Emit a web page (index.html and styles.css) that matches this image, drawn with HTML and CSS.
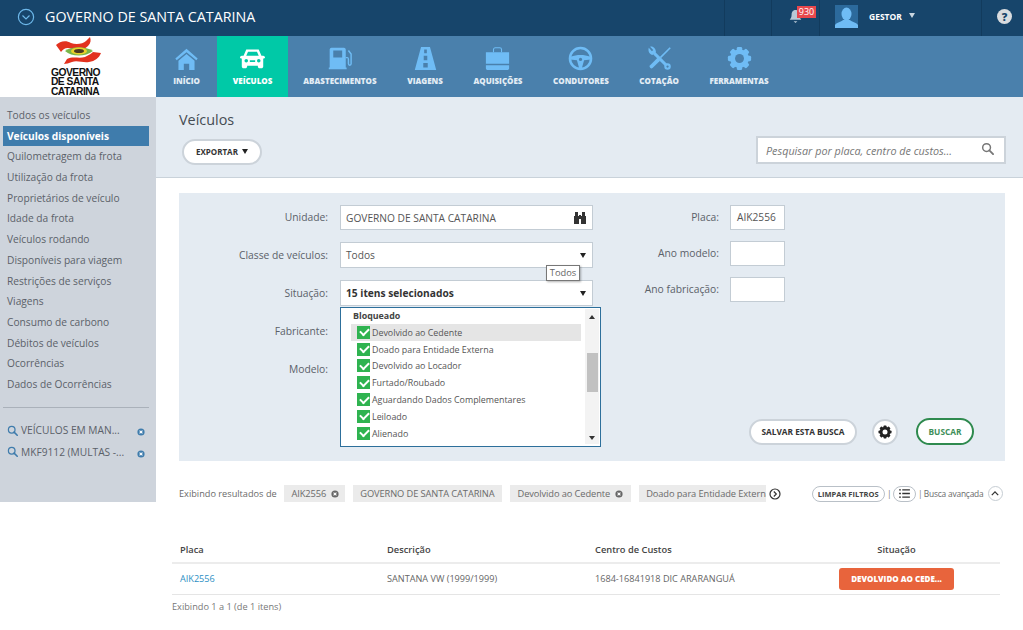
FILE: index.html
```html
<!DOCTYPE html>
<html lang="pt-BR">
<head>
<meta charset="utf-8">
<title>Veículos</title>
<link rel="stylesheet" href="styles.css">
</head>
<body>
<svg class="defs" width="0" height="0" aria-hidden="true">
  <symbol id="gear" viewBox="0 0 28 28">
    <g fill="currentColor">
      <circle cx="14" cy="14" r="10.500"/>
      <rect x="11" y="1" width="6" height="26" rx="1.500"/>
      <rect x="11" y="1" width="6" height="26" rx="1.500" transform="rotate(45 14 14)"/>
      <rect x="11" y="1" width="6" height="26" rx="1.500" transform="rotate(90 14 14)"/>
      <rect x="11" y="1" width="6" height="26" rx="1.500" transform="rotate(135 14 14)"/>
    </g>
    <circle cx="14" cy="14" r="5" class="gear-hole"/>
  </symbol>
  <symbol id="lens" viewBox="0 0 14 14">
    <circle cx="6" cy="6" r="4.200" fill="none" stroke="currentColor" stroke-width="1.600"/>
    <path d="M9 9l4 4" stroke="currentColor" stroke-width="2" stroke-linecap="round"/>
  </symbol>
  <symbol id="xdot" viewBox="0 0 10 10">
    <circle cx="5" cy="5" r="4.500" fill="currentColor"/>
    <path d="M3.200 3.200l3.600 3.600M6.800 3.200l-3.600 3.600" stroke="#fff" stroke-width="1.300"/>
  </symbol>
</svg>

<header class="topbar">
  <svg class="top-toggle" viewBox="0 0 18 18" width="18" height="18"><circle cx="9" cy="9" r="7.600" fill="none" stroke="#6db8ea" stroke-width="1.200"/><path d="M5.500 7.500L9 11l3.500-3.500" fill="none" stroke="#6db8ea" stroke-width="1.200"/></svg>
  <span class="top-title">GOVERNO DE SANTA CATARINA</span>
  <div class="top-cell top-empty"></div>
  <div class="top-cell top-bell">
    <svg viewBox="0 0 14 16" width="13" height="15"><path d="M7 1c-3 0-4.200 2.500-4.200 5 0 3-1 4-2 5.500h12.400c-1-1.500-2-2.500-2-5.500C11.200 3.500 10 1 7 1z" fill="#b9c9d6"/><path d="M5 13h4l-2 2z" fill="#b9c9d6"/></svg>
    <span class="bell-badge">930</span>
  </div>
  <div class="top-cell top-user">
    <svg class="avatar" viewBox="0 0 23 23" width="23" height="23"><rect width="23" height="23" fill="#2c6a9c"/><ellipse cx="11.500" cy="9" rx="5" ry="6.500" fill="#6fbcf5"/><path d="M0 23v-3c2-3 6-3 8-5h7c2 2 6 2 8 5v3z" fill="#6fbcf5"/></svg>
    <span class="user-name">GESTOR</span>
    <span class="user-caret"></span>
  </div>
  <div class="top-help"><span class="help-dot">?</span></div>
</header>

<div class="app">
  <aside class="left">
    <div class="logo">
      <svg class="logo-flag" viewBox="0 0 46 28" width="46" height="28">
        <path d="M1 8C5 4 11 3 16 6 21 8 28 7 31 4L35 0c1 3 1 6-2 9-4 4-10 5-16 3-5-2-8-1-11 3z" fill="#e2321f"/>
        <path d="M9 27l3-5c6-3 12 0 18-2 4-2 7-4 8-5l8 1c-2 5-6 8-12 9-6 1-12-2-17 0-3 1-6 2-8 2z" fill="#e2321f"/>
        <path d="M10 14c7-5 20-5 28 0-8 6-21 6-28 0z" fill="#7ab648"/>
        <ellipse cx="24" cy="14" rx="8" ry="3.600" fill="#e9d12a"/>
        <ellipse cx="24" cy="14" rx="5" ry="2" fill="#4a3a20"/>
      </svg>
      <div class="logo-text">GOVERNO<br>DE SANTA<br>CATARINA</div>
    </div>
    <nav class="side">
      <a class="side-item">Todos os veículos</a>
      <a class="side-item is-active">Veículos disponíveis</a>
      <a class="side-item">Quilometragem da frota</a>
      <a class="side-item">Utilização da frota</a>
      <a class="side-item">Proprietários de veículo</a>
      <a class="side-item">Idade da frota</a>
      <a class="side-item">Veículos rodando</a>
      <a class="side-item">Disponíveis para viagem</a>
      <a class="side-item">Restrições de serviços</a>
      <a class="side-item">Viagens</a>
      <a class="side-item">Consumo de carbono</a>
      <a class="side-item">Débitos de veículos</a>
      <a class="side-item">Ocorrências</a>
      <a class="side-item">Dados de Ocorrências</a>
      <hr class="side-rule">
      <div class="saved"><svg class="saved-lens"><use href="#lens"/></svg><span class="saved-text">VEÍCULOS EM MAN...</span><svg class="saved-x"><use href="#xdot"/></svg></div>
      <div class="saved"><svg class="saved-lens"><use href="#lens"/></svg><span class="saved-text">MKF9112 (MULTAS -...</span><svg class="saved-x"><use href="#xdot"/></svg></div>
    </nav>
  </aside>

  <main class="right">
    <nav class="mainnav">
      <a class="tab tab-inicio">
        <svg class="tab-icon" viewBox="0 0 28 28"><path d="M14 3L1.500 14l1.500 2L14 7l11 9 1.500-2z" fill="currentColor"/><path d="M5 16.500L14 9l9 7.500V27h-6v-7h-6v7H5z" fill="currentColor"/></svg>
        <span>INÍCIO</span>
      </a>
      <a class="tab is-active">
        <svg class="tab-icon" viewBox="0 0 28 28"><path fill="currentColor" fill-rule="evenodd" d="M7 4h14l3 7h2c1 0 2 1 2 2s-1 1-2 1v9c0 1-1 2-2 2h-2c-1 0-2-1-2-2v-1H8v1c0 1-1 2-2 2H4c-1 0-2-1-2-2v-9c-1 0-2 0-2-1s1-2 2-2h2zM9 6.500L7 11h14l-2-4.500zM7 14.500a2 2 0 1 0 0 4 2 2 0 0 0 0-4zm14 0a2 2 0 1 0 0 4 2 2 0 0 0 0-4zM11 16v2h6v-2z"/></svg>
        <span>VEÍCULOS</span>
      </a>
      <a class="tab">
        <svg class="tab-icon" viewBox="0 0 28 28"><path fill="currentColor" fill-rule="evenodd" d="M5 2h14c1 0 2 1 2 2v20h1v2H2v-2h1V4c0-1 1-2 2-2zm2 3v8h10V5z"/><path d="M21 13h2c1 0 1 1 1 2v5c0 2 3 2 3 0V9l-3-4" fill="none" stroke="currentColor" stroke-width="1.600"/></svg>
        <span>ABASTECIMENTOS</span>
      </a>
      <a class="tab">
        <svg class="tab-icon" viewBox="0 0 28 28"><path fill="currentColor" fill-rule="evenodd" d="M9 1h10l7 26H2zM12.500 4v4h3V4zM12 11v5h4v-5zM11.500 19v5h5v-5z"/></svg>
        <span>VIAGENS</span>
      </a>
      <a class="tab">
        <svg class="tab-icon" viewBox="0 0 28 28"><path d="M9.500 7V4c0-1 1-2 2-2h5c1 0 2 1 2 2v3" fill="none" stroke="currentColor" stroke-width="1.200"/><path d="M1 7h26v13H1zM1 21.500h26V25c0 1-1 2-2 2H3c-1 0-2-1-2-2z" fill="currentColor"/></svg>
        <span>AQUISIÇÕES</span>
      </a>
      <a class="tab">
        <svg class="tab-icon" viewBox="0 0 28 28"><circle cx="14" cy="14" r="11.800" fill="none" stroke="currentColor" stroke-width="2.800"/><path d="M3 12c7-2.500 15-2.500 22 0l.5 3-7.500 1-2.500 9h-3l-2.500-9-7.500-1z" fill="currentColor"/><circle cx="14" cy="15" r="1.800" class="tab-hole"/></svg>
        <span>CONDUTORES</span>
      </a>
      <a class="tab">
        <svg class="tab-icon" viewBox="0 0 28 28"><path d="M8 8l15 15" stroke="currentColor" stroke-width="3.400"/><path d="M2 2c-1 3 0 7 4 8l4-3C10 3 7 0 3.500.8L7 4.500 5.500 6z" fill="currentColor"/><circle cx="23" cy="23" r="3.600" fill="currentColor"/><circle cx="23" cy="23" r="1.300" class="tab-hole"/><path d="M26 2l-11 11" stroke="currentColor" stroke-width="1.800"/><path d="M12.500 15.500L5 23" stroke="currentColor" stroke-width="4.200" stroke-linecap="round"/></svg>
        <span>COTAÇÃO</span>
      </a>
      <a class="tab">
        <svg class="tab-icon"><use href="#gear"/></svg>
        <span>FERRAMENTAS</span>
      </a>
    </nav>

    <section class="page-head">
      <div class="head-left">
        <h1 class="page-title">Veículos</h1>
        <button class="pill pill-export">EXPORTAR <span class="caret-dark"></span></button>
      </div>
      <div class="search-box">
        <span class="search-hint">Pesquisar por placa, centro de custos...</span>
        <svg class="search-lens"><use href="#lens"/></svg>
      </div>
    </section>

    <section class="panel">
      <div class="form-col form-col-a">
        <div class="row row-first"><label class="lbl">Unidade:</label>
          <div class="ctl ctl-first"><span class="ctl-val">GOVERNO DE SANTA CATARINA</span>
            <svg class="binoc" viewBox="0 0 12 12" width="12" height="12"><path d="M1 0h3v4h1V3h2v1h1V0h3v4h1v8H7V7H5v5H0V4h1z" fill="#333"/></svg>
          </div>
        </div>
        <div class="row"><label class="lbl">Classe de veículos:</label>
          <div class="ctl"><span class="ctl-val ctl-wide">Todos</span><span class="caret-dark"></span>
            <span class="tip">Todos</span>
          </div>
        </div>
        <div class="row"><label class="lbl">Situação:</label>
          <div class="ctl"><strong class="ctl-val ctl-bold">15 itens selecionados</strong><span class="caret-dark"></span>
            <div class="drop">
              <div class="drop-list">
                <div class="drop-group">Bloqueado</div>
                <div class="drop-item is-hover"><span class="chk"></span>Devolvido ao Cedente</div>
                <div class="drop-item"><span class="chk"></span>Doado para Entidade Externa</div>
                <div class="drop-item"><span class="chk"></span>Devolvido ao Locador</div>
                <div class="drop-item"><span class="chk"></span>Furtado/Roubado</div>
                <div class="drop-item"><span class="chk"></span>Aguardando Dados Complementares</div>
                <div class="drop-item"><span class="chk"></span>Leiloado</div>
                <div class="drop-item"><span class="chk"></span>Alienado</div>
              </div>
              <div class="drop-bar">
                <span class="bar-up"></span>
                <span class="bar-thumb"></span>
                <span class="bar-down"></span>
              </div>
            </div>
          </div>
        </div>
        <div class="row"><label class="lbl">Fabricante:</label></div>
        <div class="row"><label class="lbl">Modelo:</label></div>
      </div>
      <div class="form-col form-col-b">
        <div class="fields-b">
          <div class="row-b"><label class="lbl lbl-b">Placa:</label><div class="ctl-small">AIK2556</div></div>
          <div class="row-b"><label class="lbl lbl-b">Ano modelo:</label><div class="ctl-small"></div></div>
          <div class="row-b"><label class="lbl lbl-b">Ano fabricação:</label><div class="ctl-small"></div></div>
        </div>
        <div class="actions">
          <button class="pill pill-save">SALVAR ESTA BUSCA</button>
          <button class="round-btn"><svg class="gear-small"><use href="#gear"/></svg></button>
          <button class="pill pill-go">BUSCAR</button>
        </div>
      </div>
    </section>

    <section class="chips-line">
      <span class="chips-lead">Exibindo resultados de</span>
      <span class="chip chip-short">AIK2556 <svg class="chip-x"><use href="#xdot"/></svg></span>
      <span class="chip">GOVERNO DE SANTA CATARINA</span>
      <span class="chip">Devolvido ao Cedente <svg class="chip-x"><use href="#xdot"/></svg></span>
      <span class="chip chip-cut">Doado para Entidade Externa</span>
      <svg class="chip-more" viewBox="0 0 12 12" width="12" height="12"><circle cx="6" cy="6" r="5" fill="none" stroke="#333" stroke-width="1.200"/><path d="M4.800 3.500L7.300 6 4.800 8.500" fill="none" stroke="#333" stroke-width="1.200"/></svg>
      <button class="pill pill-clear">LIMPAR FILTROS</button>
      <span class="pipe">|</span>
      <button class="pill pill-list"><svg viewBox="0 0 12 10" width="11" height="9"><path d="M0 1h2M0 5h2M0 9h2M3.500 1H12M3.500 5H12M3.500 9H12" stroke="#333" stroke-width="1.500"/></svg></button>
      <span class="pipe">|</span>
      <span class="adv">Busca avançada</span>
      <span class="adv-up"><svg viewBox="0 0 10 6" width="8" height="5"><path d="M1 5l4-4 4 4" fill="none" stroke="#333" stroke-width="1.600"/></svg></span>
    </section>

    <section class="results">
      <table class="grid">
        <thead>
          <tr><th class="c1">Placa</th><th class="c2">Descrição</th><th class="c3">Centro de Custos</th><th class="c4">Situação</th></tr>
        </thead>
        <tbody>
          <tr>
            <td><a class="plate">AIK2556</a></td>
            <td>SANTANA VW (1999/1999)</td>
            <td>1684-16841918 DIC ARARANGUÁ</td>
            <td class="cell-status"><span class="status">DEVOLVIDO AO CEDE...</span></td>
          </tr>
        </tbody>
      </table>
      <p class="count">Exibindo 1 a 1 (de 1 itens)</p>
    </section>
  </main>
</div>
</body>
</html>
```

FILE: styles.css
```css
* { box-sizing: border-box; }
html, body { margin: 0; padding: 0; }
body { font-family: "Open Sans", "Liberation Sans", sans-serif; background: #fff; color: #555; overflow: hidden; height: 630px; }
.defs { position: absolute; }
button { font-family: inherit; cursor: pointer; }

/* top bar */
.topbar { height: 36px; background: #17456b; display: flex; align-items: stretch; color: #fff; }
.top-toggle { margin: 8px 0 0 17px; }
.top-title { font-size: 14.3px; line-height: 34px; margin-left: 10px; width: 679px; white-space: nowrap; }
.top-cell { border-left: 1px solid #123b5d; position: relative; }
.top-empty { width: 47px; }
.top-bell { width: 48px; display: flex; align-items: center; padding: 0 0 3px 17px; }
.bell-badge { position: absolute; left: 25px; top: 6px; width: 19px; height: 12px; background: #e8484d; font-size: 9px; line-height: 12px; text-align: center; color: #fff; }
.top-user { width: 162px; display: flex; align-items: center; padding: 0 0 3px 15px; }
.avatar { display: block; }
.user-name { font-size: 8.500px; font-weight: 700; margin-left: 11px; }
.user-caret { margin: -2px 0 0 7px; border-left: 3.500px solid transparent; border-right: 3.500px solid transparent; border-top: 5px solid #c9d6e0; }
.top-help { flex: 1; border-left: 1px solid #123b5d; display: flex; align-items: center; padding: 0 0 3px 15px; }
.help-dot { width: 15px; height: 15px; border-radius: 50%; background: #d9dcdf; color: #17456b; font-size: 11px; font-weight: 800; line-height: 15px; text-align: center; }

/* shell */
.app { display: grid; grid-template-columns: 156px 867px; }

/* left */
.logo { height: 61px; background: #fff; display: flex; flex-direction: column; align-items: center; padding-top: 1px; }
.logo-flag { display: block; margin-left: -1px; }
.logo-text { font-family: "Liberation Sans", Arial, sans-serif; font-weight: 700; font-size: 10.300px; line-height: 9.300px; letter-spacing: -.5px; color: #111; text-align: left; margin: 3px 0 0 -5px; }
.side { height: 405px; background: #ced4dc; padding: 8px 0 0 3px; }
.side-item { display: block; width: 146px; height: 20.7px; line-height: 20.7px; font-size: 10.2px; padding-left: 4px; color: #5b6169; white-space: nowrap; }
.side-item.is-active { background: #3f7cac; color: #fff; font-weight: 700; }
.side-rule { width: 146px; height: 1px; margin: 12px 0 0; border: 0; background: #aab1ba; }
.saved { display: flex; align-items: center; height: 21.500px; padding-left: 4px; width: 146px; font-size: 10.2px; color: #5b6169; position: relative; top: 12px; }
.saved-lens { width: 11px; height: 11px; color: #3f7cac; margin-right: 3px; flex: none; }
.saved-text { flex: 1; white-space: nowrap; }
.saved-x { width: 8px; height: 8px; color: #3f7cac; margin: 4px 4px 0 0; flex: none; }

/* main nav */
.mainnav { height: 61px; background: #4a80ac; display: flex; }
.tab { display: flex; flex-direction: column; align-items: center; padding: 10px 15.3px 0; color: #6fbcf5; }
.tab span { font-size: 8px; font-weight: 800; color: #e3edf5; line-height: 12px; margin-top: 4px; white-space: nowrap; }
.tab-icon { width: 25px; height: 25px; display: block; }
.tab-inicio { width: 61px; padding-left: 0; padding-right: 0; }
.tab.is-active { width: 71px; padding-left: 0; padding-right: 0; background: #00c9a7; color: #fff; }
.tab.is-active span { color: #fff; }
.tab-hole { fill: #4a80ac; }
.gear-hole { fill: var(--hole, #4a80ac); }

/* head */
.page-head { height: 81px; background: #e4ebf2; border-bottom: 1px solid #c9d2da; display: flex; justify-content: space-between; padding: 0 17px 0 23px; }
.page-title { font-size: 14.4px; font-weight: 400; color: #454c53; margin: 13px 0 8px; line-height: 20px; }
.pill { background: #fff; border: 2px solid #ccd3da; border-radius: 14px; color: #333; font-weight: 700; padding: 0; }
.pill-export { width: 80px; height: 26px; font-size: 8px; margin-left: 3px; }
.pill-export .caret-dark { margin-left: 2px; }
.caret-dark { display: inline-block; vertical-align: 1px; border-left: 3.500px solid transparent; border-right: 3.500px solid transparent; border-top: 5px solid #222; }
.search-box { width: 250px; height: 28px; margin-top: 39px; background: #fff; border: 2px solid #ccd3da; display: flex; align-items: center; justify-content: space-between; padding: 0 10px 0 8px; }
.search-hint { font-size: 10.800px; font-style: italic; color: #777; white-space: nowrap; }
.search-lens { width: 13px; height: 13px; color: #777; margin-bottom: 3px; }

/* panel */
.panel { height: 268px; margin: 15px 18px 0 23px; background: #e4ebf2; padding-top: 12px; display: flex; }
.form-col-a { width: 414px; display: flex; flex-direction: column; gap: 12px; }
.form-col-b { flex: 1; display: flex; flex-direction: column; justify-content: space-between; padding-bottom: 16px; }
.row { display: flex; align-items: center; min-height: 26px; }
.row-first { min-height: 25px; }
.lbl { width: 149px; text-align: right; font-size: 10.3px; color: #5b6169; margin: 0 12px 1px 0; flex: none; white-space: nowrap; }
.ctl { position: relative; width: 253px; height: 26px; background: #fff; border: 1px solid #c3ccd4; display: flex; align-items: center; justify-content: space-between; padding: 0 6px 0 5px; font-size: 10.2px; color: #555; }
.ctl-first { height: 25px; }
.ctl-val { white-space: nowrap; }
.ctl-bold { color: #333; font-weight: 700; }
.binoc { display: block; }
.tip { position: absolute; right: 12px; top: 22px; width: 34px; height: 16px; background: #fff; border: 1px solid #777; box-shadow: 1px 1px 2px rgba(0,0,0,.3); font-size: 9.300px; line-height: 14px; text-align: center; color: #666; z-index: 3; }
.drop { position: absolute; left: -1px; top: 26px; width: 261px; height: 140px; background: #fff; border: 1.500px solid #2d6f9b; display: flex; justify-content: space-between; z-index: 2; }
.drop-list { width: 240px; padding: 1px 0 0 10px; }
.drop-group { font-size: 8.900px; font-weight: 700; color: #444; height: 15px; line-height: 14px; padding-left: 2px; }
.drop-item { display: flex; align-items: center; height: 16.8px; font-size: 8.900px; color: #555; white-space: nowrap; padding-left: 6px; }
.drop-item.is-hover { background: #e5e5e5; }
.chk { position: relative; width: 13px; height: 13px; background: #2fb350; margin-right: 2px; flex: none; }
.chk::after { content: ""; position: absolute; left: 3px; top: 2.500px; width: 7px; height: 4px; border-left: 2px solid #fff; border-bottom: 2px solid #fff; transform: rotate(-45deg); }
.drop-bar { flex: none; width: 14px; margin: 1px 1px 2px 0; background: #f3f3f3; display: flex; flex-direction: column; align-items: center; }
.bar-up { margin-top: 6px; border-left: 3px solid transparent; border-right: 3px solid transparent; border-bottom: 4px solid #333; }
.bar-thumb { width: 11px; height: 39px; background: #c1c1c1; margin-top: 34px; }
.bar-down { margin-top: auto; margin-bottom: 4px; border-left: 3px solid transparent; border-right: 3px solid transparent; border-top: 4px solid #333; }
.fields-b { display: flex; flex-direction: column; gap: 11px; }
.row-b { display: flex; align-items: center; }
.lbl-b { width: 126px; margin-right: 11px; }
.ctl-small { width: 55px; height: 25px; background: #fff; border: 1px solid #c3ccd4; font-size: 10.2px; line-height: 23px; padding-left: 6px; color: #555; }
.actions { display: flex; justify-content: flex-end; align-items: center; padding-right: 31px; }
.pill-save { width: 108px; height: 26px; font-size: 8.300px; margin-right: 15px; }
.round-btn { --hole: #fff; width: 26px; height: 26px; border-radius: 50%; background: #fff; border: 2px solid #ccd3da; padding: 0; margin-right: 18px; display: flex; align-items: center; justify-content: center; }
.gear-small { width: 14px; height: 14px; color: #222; }
.pill-go { width: 58px; height: 27px; font-size: 8.300px; color: #3e8e59; border-color: #2f8a4f; }

/* chips */
.chips-line { display: flex; align-items: center; height: 17px; margin: 24px 0 0 23px; font-size: 9.300px; color: #6a6a6a; white-space: nowrap; }
.chips-lead { width: 105px; flex: none; font-size: 9.200px; }
.chip { display: flex; align-items: center; height: 17px; background: #ebebeb; padding: 0 7.500px; margin-right: 8px; color: #6a6a6a; letter-spacing: -.1px; flex: none; }
.chip-short { padding-right: 5.500px; }
.chip-x { width: 8px; height: 8px; color: #666; margin-left: 5px; }
.chip-cut { width: 127px; overflow: hidden; padding-right: 0; margin-right: 3px; }
.chip-more { flex: none; margin-right: 31px; }
.pill-clear { width: 73px; height: 16px; font-size: 7.500px; border-width: 1px; border-color: #b9c0c7; color: #444; flex: none; }
.pipe { color: #888; margin: 0 1px 0 2px; flex: none; }
.pill-list { width: 23px; height: 16px; border-width: 1px; border-color: #b9c0c7; display: flex; align-items: center; justify-content: center; flex: none; }
.adv { width: 62px; letter-spacing: -.2px; font-size: 8.400px; flex: none; }
.adv-up { width: 15px; height: 15px; border: 1px solid #c6cdd3; border-radius: 50%; margin-left: 2px; display: flex; align-items: center; justify-content: center; flex: none; }

/* table */
.results { margin: 38px 23px 0 16px; width: 828px; }
.grid { width: 100%; border-collapse: collapse; table-layout: fixed; font-size: 9.150px; color: #666; }
.grid th { font-weight: 600; font-size: 9.300px; color: #444; text-align: left; height: 23px; padding: 0 0 3px 8px; border-bottom: 2px solid #ececec; }
.c1 { width: 207px; }
.c2 { width: 208px; }
.c3 { width: 206px; }
.grid th.c4 { text-align: center; padding-left: 0; }
.grid td { height: 31px; padding: 0 0 0 8px; border-bottom: 1px solid #e5e5e5; white-space: nowrap; }
.grid td.cell-status { padding: 0; text-align: center; }
.plate { color: #2e8fc4; }
.status { display: inline-block; width: 115px; height: 22px; line-height: 22px; background: #e8643c; color: #fff; font-size: 8px; font-weight: 800; border-radius: 3px; text-align: center; vertical-align: middle; }
.count { margin: 5px 0 0; font-size: 9.200px; line-height: 14px; color: #777; }
```
